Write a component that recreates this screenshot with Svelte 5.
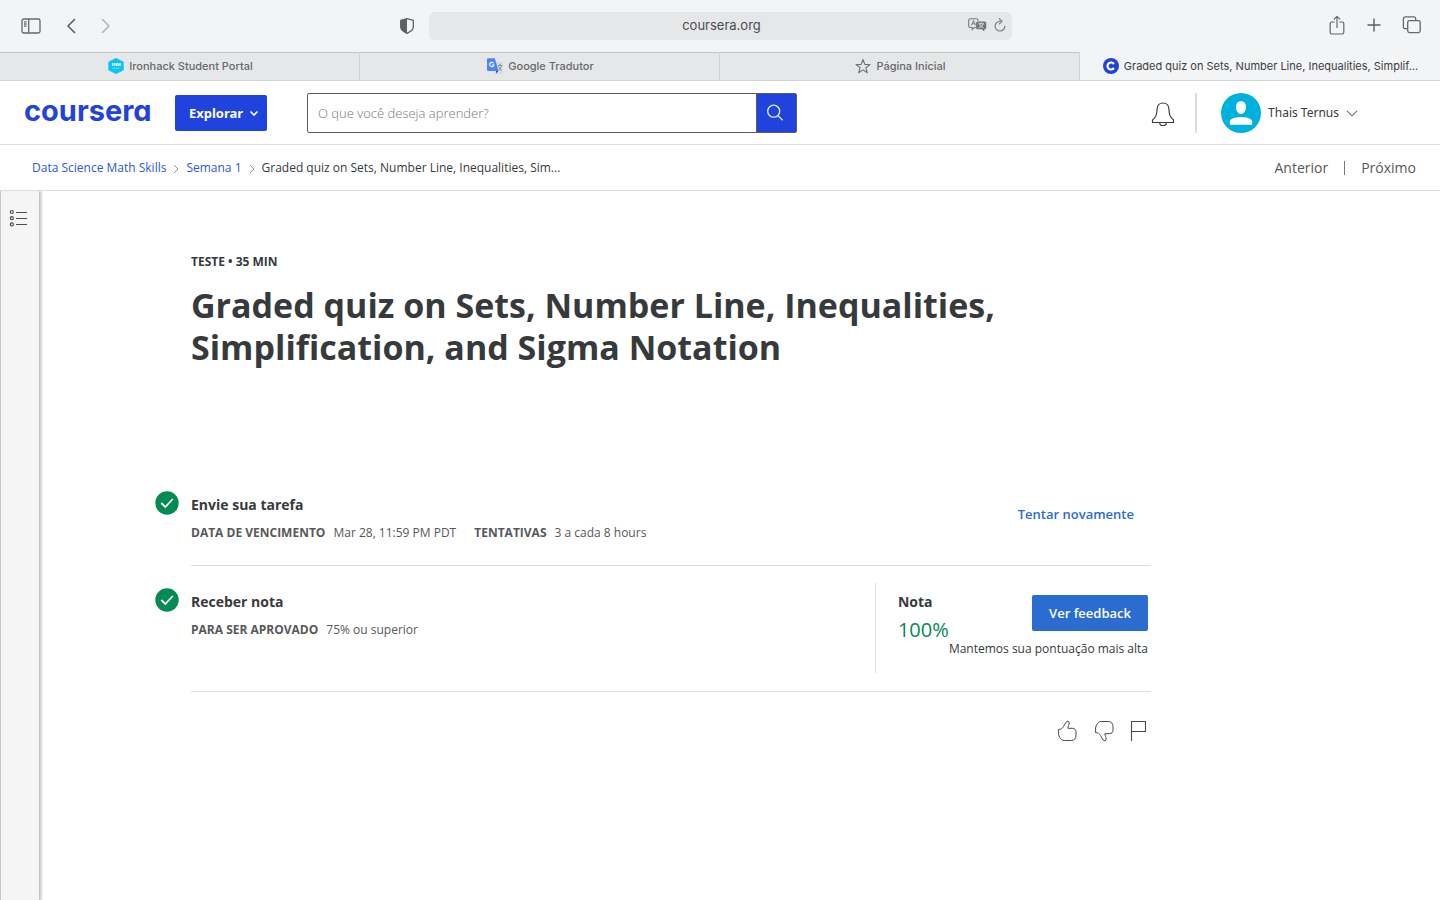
<script>
  const crumbs = ['Data Science Math Skills', 'Semana 1'];
  const thumb = 'M1.5 9.500c2.400-.200 4-1 5-3L9.100 2c.900-1.400 3.100-1.100 3.100 1 0 2-1.500 3.300-1.300 5.300h4.500c2.400 0 3.600 1.500 3.600 3.700v3.300c0 3.400-1.700 5.200-4.600 5.200H7.200C3.500 20.500.800 16 1.500 9.500z';
</script>

<div class="page">
  <div class="toolbar">
    <div class="tools">
      <button aria-label="Barra lateral">
        <svg width="20" height="16" viewBox="0 0 20 16" fill="none" stroke="#666769" stroke-width="1.3"><rect x="1" y="1" width="18" height="14" rx="1.8" /><path d="M7.7 1v14M3 3.8h2.6M3 6h2.6M3 8.2h2.6" /></svg>
      </button>
      <button class="back" aria-label="Voltar">
        <svg width="10" height="16" viewBox="0 0 10 16" fill="none" stroke="#5c5d5f" stroke-width="1.6" stroke-linecap="round" stroke-linejoin="round"><path d="M8.5 1.5 2 8l6.500 6.500" /></svg>
      </button>
      <button class="forward" aria-label="Avançar">
        <svg width="10" height="16" viewBox="0 0 10 16" fill="none" stroke="#b3b4b6" stroke-width="1.6" stroke-linecap="round" stroke-linejoin="round"><path d="M1.500 1.500 8 8l-6.500 6.500" /></svg>
      </button>
      <button class="shield" aria-label="Privacidade">
        <svg width="16" height="18" viewBox="0 0 16 18"><path d="M8 1.600 14.300 3.400v6.400c0 3-2.800 5-6.300 6.500-3.500-1.500-6.300-3.500-6.300-6.500V3.400z" fill="none" stroke="#606163" stroke-width="1.300" stroke-linejoin="round" /><path d="M8 1.600v14.700c-3.500-1.500-6.300-3.500-6.300-6.500V3.400z" fill="#606163" /></svg>
      </button>
    </div>
    <div class="address">
      <span>coursera.org</span>
      <div class="address-tools">
        <button aria-label="Traduzir">
          <svg width="19" height="14" viewBox="0 0 19 14"><path d="M8.500 9.500H6.400l-2.200 2V9.500H2.200A1.500 1.500 0 0 1 .700 8V2.200A1.500 1.500 0 0 1 2.200.700h6.300A1.500 1.500 0 0 1 10 2.200V3" fill="none" stroke="#7a7b7d" stroke-width="1.100" /><path d="m3.500 7.400 2-5 2 5M4.200 5.800h2.600" fill="none" stroke="#7a7b7d" /><path d="M9.600 3.500h7.200a1.500 1.500 0 0 1 1.500 1.500v4.700a1.500 1.500 0 0 1-1.500 1.500h-.5v2.300l-2.500-2.300H9.600A1.500 1.500 0 0 1 8.100 9.700V5a1.500 1.500 0 0 1 1.500-1.500z" fill="#737476" /><path d="M10.500 5.700h5.400M13.200 4.600v1M11.500 6c.7 2 2 3 4 3.700M15 6c-.7 2-2 3-4.300 3.700" fill="none" stroke="#e6e7e9" stroke-width=".9" /></svg>
        </button>
        <button aria-label="Recarregar">
          <svg width="12" height="14" viewBox="0 0 12 14" fill="none" stroke="#77787a" stroke-width="1.100" stroke-linecap="round" stroke-linejoin="round"><path d="M6 3.200A4.900 4.900 0 1 0 10.900 8M5.200.700 8 3.300 5.300 5.900" /></svg>
        </button>
      </div>
    </div>
    <div class="tools right">
      <button aria-label="Compartilhar">
        <svg width="16" height="20" viewBox="0 0 16 20" fill="none" stroke="#666769" stroke-width="1.200" stroke-linecap="round" stroke-linejoin="round"><path d="M5.300 7H2.900A1.700 1.700 0 0 0 1.200 8.700v8.600A1.700 1.700 0 0 0 2.900 19h10.200a1.700 1.700 0 0 0 1.700-1.700V8.700A1.700 1.700 0 0 0 13.100 7h-2.400M8 12.500V1.500M5.200 4.200 8 1.400l2.800 2.800" /></svg>
      </button>
      <button class="plus" aria-label="Nova aba">
        <svg width="14" height="14" viewBox="0 0 14 14" fill="none" stroke="#5c5d5f" stroke-width="1.400" stroke-linecap="round"><path d="M7 1v12M1 7h12" /></svg>
      </button>
      <button class="tabs-btn" aria-label="Visão geral das abas">
        <svg width="20" height="20" viewBox="0 0 20 20" fill="none" stroke="#666769" stroke-width="1.300"><path d="M5.800 13.700H3.200a1.800 1.800 0 0 1-1.800-1.800V3.700a1.800 1.800 0 0 1 1.800-1.800h8.700a1.800 1.800 0 0 1 1.800 1.800v2" /><rect x="5.700" y="5.600" width="12.500" height="12" rx="1.800" /></svg>
      </button>
    </div>
  </div>

  <div class="tabs">
    <a class="tab" href="#ironhack">
      <svg width="16" height="16" viewBox="0 0 16 16"><path d="M8 .200 15.400 4v8L8 15.800.600 12V4z" fill="#0ac3fa" stroke="#0ac3fa" stroke-width=".6" stroke-linejoin="round" /><path d="M4.500 5v3M6 8V5.500h1.300V7L6 7M8.500 5.500h1.500v2H8.500zM11 8V5.300l1.200 2.400V5" stroke="#fff" stroke-width=".9" fill="none" /><path d="M4.500 10.300h7" stroke="#b5edff" stroke-dasharray="1 .7" /></svg>
      <span>Ironhack Student Portal</span>
    </a>
    <a class="tab" href="#tradutor">
      <svg width="16" height="16" viewBox="0 0 16 16"><path d="M8 4h7.500v11.700H9z" fill="#d8dadd" /><path d="m9 13 2.300 0-2.500 2.700z" fill="#3634c4" /><path d="M1.200.200h6.600L11.600 13H1.200A1.200 1.200 0 0 1 0 11.800V1.400A1.200 1.200 0 0 1 1.200.200z" fill="#4c86f7" /><path d="M6.500 5.100A2.200 2.200 0 1 0 7 7H4.900" fill="none" stroke="#fff" stroke-width="1.100" /><path d="M11 7.500h4.500M13 6v1.500M11.500 12.500c1.700-1.200 2.500-3 2.700-5M11.500 8.700c.7 1.500 1.600 2.700 3.300 3.800" fill="none" stroke="#6c8584" stroke-width=".8" /></svg>
      <span>Google Tradutor</span>
    </a>
    <a class="tab" href="#inicio">
      <svg width="16" height="16" viewBox="0 0 16 16"><path d="m8 1.500 1.800 4.900 5.200.200-4.100 3.200 1.400 5L8 11.900l-4.300 2.900 1.400-5L1 6.600l5.200-.200z" fill="none" stroke="#707173" stroke-width="1.100" stroke-linejoin="round" /></svg>
      <span>Página Inicial</span>
    </a>
    <a class="tab active" href="#quiz">
      <svg width="16" height="16" viewBox="0 0 16 16"><circle cx="8" cy="8" r="8" fill="#1f43dc" /><path d="M10.900 6A3.500 3.500 0 1 0 10.900 10" fill="none" stroke="#fff" stroke-width="2.200" /></svg>
      <span>Graded quiz on Sets, Number Line, Inequalities, Simplif...</span>
    </a>
  </div>

  <header class="header">
    <a class="logo" href="#home">coursera</a>
    <button class="explore">Explorar
      <svg width="10" height="8" viewBox="0 0 10 8" fill="none" stroke="#fff" stroke-width="1.700"><path d="m1.500 2.500 3.500 3.500L8.500 2.500" /></svg>
    </button>
    <form class="search">
      <input type="text" aria-label="Buscar" placeholder="O que você deseja aprender?" />
      <button type="button" aria-label="Buscar">
        <svg width="18" height="18" viewBox="0 0 18 18" fill="none" stroke="#e6ebff" stroke-width="1.300"><circle cx="7.700" cy="7.200" r="6" /><path d="m12 11.600 4.700 4.700" /></svg>
      </button>
    </form>
    <button class="bell" aria-label="Notificações">
      <svg width="24" height="26" viewBox="0 0 24 26" fill="none" stroke="#3c3d40" stroke-width="1.200" stroke-linejoin="round"><path d="M12 3C8 3 6.300 5.500 6.100 9 5.800 15 5 17 1.500 20v2.500h21V20C19 17 18.200 15 17.900 9 17.700 5.500 16 3 12 3zM8.700 22.700a3.300 3 0 0 0 6.600 0" /></svg>
    </button>
    <button class="user">
      <svg width="40" height="40" viewBox="0 0 40 40"><circle cx="20" cy="20" r="20" fill="#00b1de" /><path d="M20 8.300c3.100 0 5 2.200 5 5.400 0 3.600-2 7.300-5 7.300s-5-3.700-5-7.300c0-3.200 1.900-5.400 5-5.400zM8.800 31.800v-3.300c0-1 .4-1.600 1.200-2.100 5.300-3.200 14.700-3.200 20 0 .8.500 1.200 1.100 1.200 2.100v3.300z" fill="#fff" /></svg>
      <span>Thais Ternus</span>
      <svg width="12" height="8" viewBox="0 0 12 8" fill="none" stroke="#6b6c6e" stroke-width="1.100"><path d="m1 1.800 5 5 5-5" /></svg>
    </button>
  </header>

  <nav class="crumbs">
    {#each crumbs as crumb}
      <a href="#curso">{crumb}</a>
      <svg width="6" height="10" viewBox="0 0 6 10" fill="none" stroke="#929395"><path d="m1 2 4 4-4 4" /></svg>
    {/each}
    <span>Graded quiz on Sets, Number Line, Inequalities, Sim...</span>
    <div class="pager">
      <a href="#anterior">Anterior</a>
      <a href="#proximo">Próximo</a>
    </div>
  </nav>

  <div class="body">
    <aside>
      <button aria-label="Menu do curso">
        <svg width="18" height="18" viewBox="0 0 18 18" fill="none" stroke="#4c4d4f" stroke-width="1.200"><circle cx="2.800" cy="3" r="1.500" /><circle cx="2.800" cy="9.200" r="1.500" /><circle cx="2.800" cy="15.400" r="1.500" /><path d="M7 3.500H18M7 9.500H18M7 15.500H18" /></svg>
      </button>
    </aside>
    <main>
      <div class="intro">
        <p class="kind">TESTE • 35 MIN</p>
        <h1>Graded quiz on Sets, Number Line, Inequalities, Simplification, and Sigma Notation</h1>
      </div>

      {#snippet check()}
        <svg class="check" width="24" height="24" viewBox="0 0 24 24"><circle cx="12" cy="12" r="11.700" fill="#048a55" /><path d="m6.300 12 4 4 7.500-8" fill="none" stroke="#fff" stroke-width="1.800" /></svg>
      {/snippet}

      <section class="step submit">
        {@render check()}
        <div class="row">
          <div class="info">
            <h2>Envie sua tarefa</h2>
            <p><b>DATA DE VENCIMENTO</b><span>Mar 28, 11:59 PM PDT</span><b>TENTATIVAS</b><span>3 a cada 8 hours</span></p>
          </div>
          <button class="retry">Tentar novamente</button>
        </div>
      </section>

      <section class="step result">
        {@render check()}
        <div class="row">
          <div class="info">
            <h2>Receber nota</h2>
            <p><b>PARA SER APROVADO</b><span>75% ou superior</span></p>
          </div>
          <div class="grade">
            <div class="score">
              <h2>Nota</h2>
              <strong>100%</strong>
            </div>
            <div class="feedback">
              <button>Ver feedback</button>
              <span>Mantemos sua pontuação mais alta</span>
            </div>
          </div>
        </div>
      </section>

      <div class="reactions">
        <button aria-label="Gostei">
          <svg width="20" height="22" viewBox="0 0 20 22" fill="none" stroke="#4a4b4e" stroke-linejoin="round"><path d={thumb} /></svg>
        </button>
        <button aria-label="Não gostei">
          <svg width="20" height="22" viewBox="0 0 20 22" fill="none" stroke="#4a4b4e" stroke-linejoin="round"><path d={thumb} transform="matrix(1 0 0 -1 0 22)" /></svg>
        </button>
        <button class="flag" aria-label="Denunciar">
          <svg width="16" height="22" viewBox="0 0 16 22" fill="none" stroke="#4a4b4e" stroke-width="1.100"><path d="M1.500 21V1.500h14v10h-14" /></svg>
        </button>
      </div>
    </main>
  </div>
</div>

<style>
  :global(body) { margin: 0; background: #fff; }
  .page, .page * { box-sizing: border-box; }
  .page { min-height: 100vh; display: flex; flex-direction: column; font-family: "Open Sans", sans-serif; font-size: 12px; color: #373a3c; }
  button { display: flex; align-items: center; justify-content: center; padding: 0; border: 0; background: none; color: inherit; font: inherit; }
  a { color: inherit; text-decoration: none; }
  svg { display: block; flex: none; }
  h1, h2, p { margin: 0; }

  .toolbar { display: grid; grid-template-columns: 1fr minmax(0, 583px) 1fr; align-items: center; height: 52px; background: #f3f4f6; font-family: Inter, sans-serif; }
  .tools { display: flex; align-items: center; padding: 0 0 1px 21px; }
  .back { margin-left: 25px; }
  .forward { margin-left: 25px; }
  .shield { margin-left: auto; margin-right: 14px; }
  .right { justify-content: flex-end; padding: 0 18px 2px 0; }
  .plus { margin-left: 22px; }
  .tabs-btn { margin-left: 21px; }
  .address { position: relative; display: flex; align-items: center; justify-content: center; height: 28px; padding: 0 0 2px 3px; border-radius: 6px; background: #e6e7e9; font-size: 13px; color: #4b4c4e; }
  .address-tools { position: absolute; right: 6px; display: flex; align-items: center; gap: 7px; }

  .tabs { display: grid; grid-template-columns: repeat(4, minmax(0, 1fr)); height: 29px; border-bottom: 1px solid #d3d4d6; background: #f3f4f6; font-family: Inter, sans-serif; font-size: 11px; color: #68696b; }
  .tab { display: flex; align-items: center; justify-content: center; gap: 5px; padding: 0 0 2px 2px; border-top: 1px solid #c3c4c6; border-right: 1px solid #cfd0d2; background: #e6e7e9; white-space: nowrap; font-weight: 500; }
  .active { border-color: transparent; background: #f3f4f6; color: #3c3d3f; font-weight: 400; }

  .header { display: flex; align-items: center; height: 64px; padding: 0 82px 0 24px; border-bottom: 1px solid #dcdddf; }
  .logo { width: 128px; margin-bottom: 4px; color: #1f43dc; font: 700 29px/36px Inter, sans-serif; font-feature-settings: "cv11"; }
  .explore { gap: 6px; width: 92px; height: 36px; margin-left: 23px; padding-left: 6px; border-radius: 2px; background: #1f43dc; color: #fff; font: 700 13px "Noto Sans", sans-serif; }
  .search { display: flex; width: 490px; height: 40px; margin-left: 40px; border: 1px solid #5a5b5d; border-radius: 2px; }
  .search input { flex: 1; min-width: 0; padding: 0 10px; border: 0; background: none; font: 300 13px "Open Sans", sans-serif; }
  .search input::placeholder { color: #77787a; opacity: 1; }
  .search button { width: 40px; padding-right: 4px; border-left: 1px solid #5a5b5d; background: #1f43dc; }
  .bell { margin-left: auto; padding-right: 20px; }
  .user { gap: 7px; height: 40px; padding-left: 24px; border-left: 2px solid #dcdddf; font: 400 12px "Noto Sans", sans-serif; }

  .crumbs { display: flex; align-items: center; height: 46px; padding: 0 24px 0 32px; border-bottom: 1px solid #dcdddf; gap: 7px; white-space: nowrap; }
  .crumbs > a { color: #2a58e0; }
  .pager { display: flex; align-items: center; margin-left: auto; font-size: 14px; color: #57585a; line-height: 14px; }
  .pager a + a { margin-left: 16px; padding-left: 16px; border-left: 1px solid #77787a; }

  .body { display: flex; flex: 1; }
  aside { width: 39px; padding: 18px 0 0 8px; border-left: 1px solid #c8c8c8; background: #f5f5f5; box-shadow: 1px 1px 3px 1px #b9b9b9; clip-path: inset(0 -6px 0 0); }
  main { flex: 1; max-width: 1112px; padding: 62px 0 0 116px; }
  .intro { margin-bottom: 105px; padding-left: 36px; }
  .kind { font-weight: 700; line-height: 18px; }
  h1 { margin-top: 13px; font-size: 34px; line-height: 42px; font-weight: 700; }
  .step { display: flex; gap: 12px; }
  .row { display: flex; flex: 1; justify-content: space-between; border-bottom: 1px solid #dcdddf; }
  .submit .row { height: 93px; }
  .submit .check { margin-top: 18px; }
  .submit .info { padding-top: 20px; }
  .result .row { height: 126px; }
  .result .check { margin-top: 22px; }
  .result .info { padding-top: 24px; }
  h2 { font-size: 14px; line-height: 24px; font-weight: 700; }
  .info p { display: flex; margin-top: 6px; line-height: 20px; color: #57585a; }
  .info b { margin-right: 8px; }
  .info span { margin-right: 18px; }
  .retry { align-self: flex-start; margin: 31px 17px 0 0; color: #2a6cd0; font-weight: 600; font-size: 13px; line-height: 20px; }
  .grade { display: flex; height: 90px; margin-top: 17px; padding: 7px 3px 0 22px; border-left: 1px solid #dcdddf; }
  .score { display: flex; flex-direction: column; }
  .score strong { width: 51px; color: #048a55; font-size: 20px; line-height: 32px; font-weight: 400; }
  .feedback { display: flex; flex-direction: column; align-items: flex-end; padding-top: 5px; line-height: 20px; white-space: nowrap; }
  .feedback button { width: 116px; height: 36px; margin-bottom: 8px; border-radius: 2px; background: #2a6cd0; color: #fff; font-size: 13px; font-weight: 600; }
  .reactions { display: flex; justify-content: flex-end; gap: 17px; margin-top: 28px; padding-right: 5px; }
  .flag { margin-left: -1px; }
</style>
